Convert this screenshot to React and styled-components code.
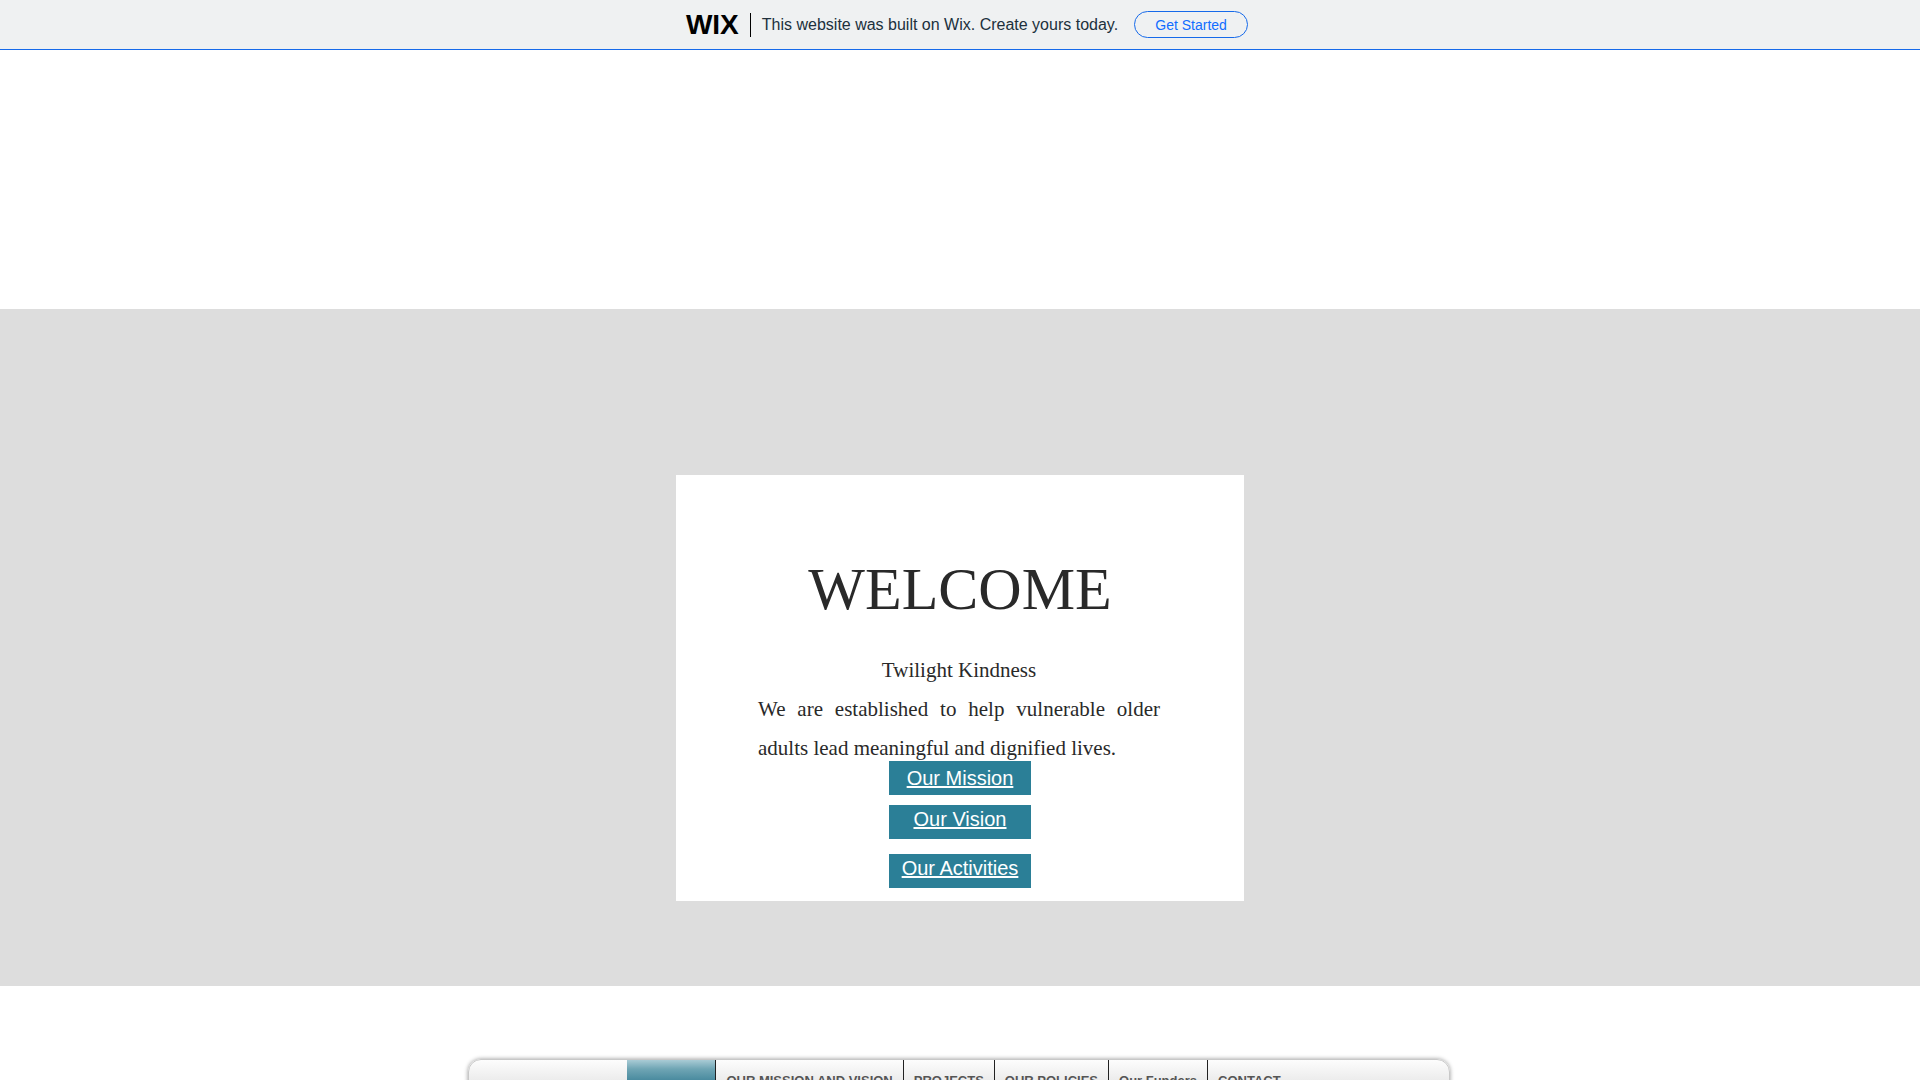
import React from 'react';
import styled, { createGlobalStyle } from 'styled-components';

const GlobalStyle = createGlobalStyle`
    * {
        box-sizing: border-box;
    }
    body {
        margin: 0;
        background-color: #fff;
        font-family: "Liberation Sans", Arial, sans-serif;
    }
    #root {
        height: 100vh;
        overflow: hidden;
    }
`;

const Banner = styled.header`
    display: flex;
    justify-content: center;
    align-items: center;
    height: 50px;
    padding-left: 14px;
    background-color: #eff1f2;
    border-bottom: 1px solid #166aea;
`;
const Logo = styled.a`
    color: #000;
    font-size: 28px;
    line-height: 30px;
    font-weight: 700;
    text-decoration: none;
`;
const Divider = styled.span`
    width: 1px;
    height: 24px;
    margin: 0 11px;
    background-color: #000;
`;
const BannerText = styled.span`
    color: #20303c;
    font-size: 16px;
    margin-right: 16px;
`;
const GetStarted = styled.button`
    width: 114px;
    height: 27px;
    padding: 0;
    color: #116dff;
    background-color: transparent;
    border: 1px solid #166aea;
    border-radius: 14px;
    font-family: inherit;
    font-size: 14px;
    cursor: pointer;
`;

const Hero = styled.section`
    display: flex;
    justify-content: center;
    margin-top: 259px;
    padding: 166px 0 85px;
    background-color: #ddd;
`;
const Card = styled.div`
    display: flex;
    flex-direction: column;
    align-items: center;
    width: 568px;
    padding: 78px 82px 13px;
    background-color: #fff;
`;
const Title = styled.h1`
    margin: 0;
    color: #292929;
    font-family: "Liberation Serif", "Times New Roman", serif;
    font-size: 60px;
    line-height: 72px;
    font-weight: 400;
`;
const Text = styled.p`
    margin: 0;
    color: #292929;
    font-family: "Liberation Serif", "Times New Roman", serif;
    font-size: 21px;
    line-height: 39px;
    text-align: ${(props) => props.$align};
`;
const Intro = styled.div`
    width: 100%;
    margin-top: 26px;
    padding-right: 2px;
`;
const Links = styled.div`
    display: flex;
    flex-direction: column;
    margin-top: -7px;
`;
const LinkButton = styled.a`
    width: 142px;
    height: 34px;
    margin-bottom: ${(props) => props.$gap}px;
    color: #fff;
    background-color: #2b7f97;
    font-size: 20px;
    line-height: ${(props) => props.$line}px;
    text-align: center;
`;

const NavArea = styled.div`
    display: flex;
    justify-content: center;
    margin-top: 73px;
    padding-right: 2px;
`;
const Nav = styled.nav`
    display: flex;
    justify-content: center;
    width: 982px;
    height: 50px;
    background-image: linear-gradient(#fdfdfd, #ececec 20px, #e2e2e2);
    border: 1px solid #c8c8c8;
    border-radius: 13px;
    box-shadow: 0 0 4px rgba(0, 0, 0, 0.4);
`;
const NavItem = styled.a`
    padding: 0 10px;
    color: #555;
    border-left: 1px solid #222;
    font-size: 13px;
    line-height: 41px;
    font-weight: 700;
    text-decoration: none;
`;
const ActiveItem = styled.a`
    width: 88px;
    background-image: linear-gradient(#a9cbd5, #6fa5b4 9px, #4a8b9f 20px, #2b7f97);
`;

const links = [
    { label: 'Our Mission', line: 34, gap: 10 },
    { label: 'Our Vision', line: 28, gap: 15 },
    { label: 'Our Activities', line: 28, gap: 0 },
];
const pages = ['OUR MISSION AND VISION', 'PROJECTS', 'OUR POLICIES', 'Our Funders', 'CONTACT'];

const App = () => {
    return (
        <>
            <GlobalStyle />
            <Banner>
                <Logo href="#">WIX</Logo>
                <Divider />
                <BannerText>This website was built on Wix. Create yours today.</BannerText>
                <GetStarted>Get Started</GetStarted>
            </Banner>
            <Hero>
                <Card>
                    <Title>WELCOME</Title>
                    <Intro>
                        <Text $align="center">Twilight Kindness</Text>
                        <Text $align="justify">
                            We are established to help vulnerable older adults lead meaningful and dignified lives.
                        </Text>
                    </Intro>
                    <Links>
                        {links.map((item) => (
                            <LinkButton key={item.label} href="#" $line={item.line} $gap={item.gap}>
                                {item.label}
                            </LinkButton>
                        ))}
                    </Links>
                </Card>
            </Hero>
            <NavArea>
                <Nav>
                    <ActiveItem href="#" aria-label="Home" aria-current="page" />
                    {pages.map((page) => (
                        <NavItem key={page} href="#">{page}</NavItem>
                    ))}
                </Nav>
            </NavArea>
        </>
    );
}
export default App;
